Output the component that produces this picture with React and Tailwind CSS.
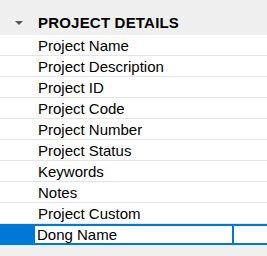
import React from "react";

const rows = [
  "Project Name",
  "Project Description",
  "Project ID",
  "Project Code",
  "Project Number",
  "Project Status",
  "Keywords",
  "Notes",
  "Project Custom",
];

export default function App() {
  return (
    <div
      className="w-[267px] h-[256px] bg-[#f0f0f0] overflow-hidden text-black"
      style={{ fontFamily: '"Liberation Sans", Arial, sans-serif' }}
    >
      {/* Header */}
      <div className="h-[35px] flex items-end bg-[#efefef]">
        <div className="h-[24px] w-full flex items-center">
          <div className="w-[38px] flex justify-center pr-[1px]">
            <svg width="8" height="5" viewBox="0 0 8 5">
              <polygon points="0,0 8,0 4,4" fill="#555" />
            </svg>
          </div>
          <span className="text-[15px] font-bold tracking-[0.2px]">PROJECT DETAILS</span>
        </div>
      </div>

      {/* Rows */}
      <div className="bg-white">
        {rows.map((label) => (
          <div
            key={label}
            className="h-[21px] flex items-center border-b border-[#e5e5e5]"
          >
            <div className="w-[38px] shrink-0" />
            <span className="text-[15px] leading-none">{label}</span>
          </div>
        ))}
      </div>

      {/* Editing row */}
      <div className="h-[21px] flex">
        <div className="w-[35px] shrink-0 bg-[#0078d7]" />
        <div className="flex-1 flex border-y-2 border-[#0078d7] bg-white">
          <div className="w-[199px] flex items-center pl-[2px] border-r-2 border-[#0078d7]">
            <span className="text-[15px] leading-none">Dong Name</span>
          </div>
          <div className="flex-1" />
        </div>
      </div>
    </div>
  );
}
